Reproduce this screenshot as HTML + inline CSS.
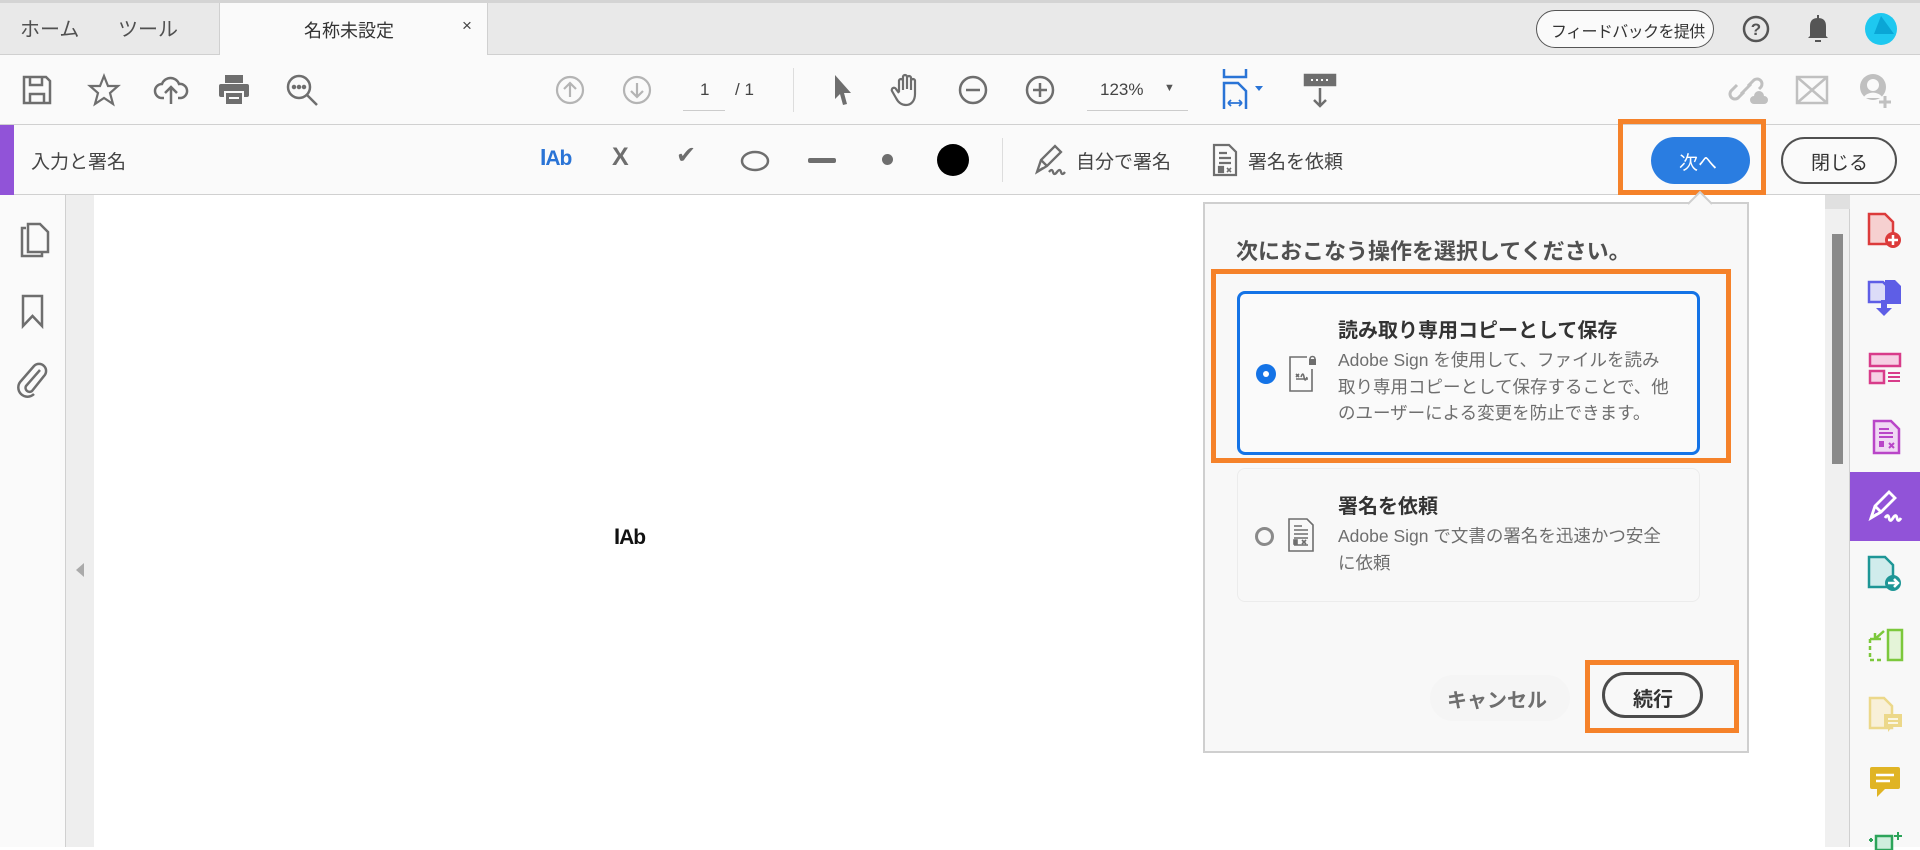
<!DOCTYPE html>
<html><head><meta charset="utf-8">
<style>
*{margin:0;padding:0;box-sizing:border-box}
body{width:1920px;height:847px;overflow:hidden;position:relative;background:#fff;font-family:"Liberation Sans","Noto Sans CJK JP",sans-serif;color:#4b4b4b}
.a{position:absolute}
svg{position:absolute;overflow:visible}
.t{position:absolute;white-space:nowrap}
</style></head><body>
<div class="a" style="left:0;top:0;width:1920px;height:55px;background:#e9e9e9;border-top:3px solid #d4d4d4;border-bottom:1px solid #d0d0d0"></div>
<div class="t" style="left:20px;top:13px;font-size:20px;color:#505050">ホーム</div>
<div class="t" style="left:118px;top:13px;font-size:20px;color:#505050">ツール</div>
<div class="a" style="left:219px;top:3px;width:269px;height:53px;background:#fafafa;border-left:1px solid #d0d0d0;border-right:1px solid #d0d0d0"></div>
<div class="t" style="left:304px;top:17px;font-size:18px;color:#333">名称未設定</div>
<div class="t" style="left:462px;top:16px;font-size:17px;color:#444">×</div>
<div class="a" style="left:1536px;top:10px;width:178px;height:38px;border:1.5px solid #555;border-radius:19px;background:#fafafa"></div>
<div class="t" style="left:1551px;top:18px;font-size:16px;color:#333;letter-spacing:-0.6px">フィードバックを提供</div>
<svg style="left:1742px;top:15px" width="28" height="28"><circle cx="14" cy="14" r="12" fill="none" stroke="#555" stroke-width="2.5"/><text x="14" y="20" font-size="17" font-weight="bold" text-anchor="middle" fill="#555" font-family="Liberation Sans">?</text></svg>
<svg style="left:1806px;top:14px" width="24" height="30"><path d="M4 22 L4 12 Q4 4 12 4 Q20 4 20 12 L20 22 L22 24 L2 24Z M9 26 h6 v2 h-6z M11 1 h2 v4 h-2z" fill="#555"/></svg>
<svg style="left:1864px;top:12px" width="34" height="34"><circle cx="17" cy="17" r="16" fill="#1ec8f0"/><path d="M17 4 L30 22 L10 22Z" fill="#0aa6d6"/></svg>
<div class="a" style="left:0;top:55px;width:1920px;height:70px;background:#fafafa;border-bottom:1px solid #d0d0d0"></div>
<svg style="left:22px;top:75px" width="30" height="30" fill="none" stroke="#6e6e6e" stroke-width="2.5"><path d="M2 2h22l4 4v22H2z"/><path d="M8 2v8h12V2M8 28v-9h14v9"/></svg>
<svg style="left:88px;top:74px" width="32" height="32" fill="none" stroke="#6e6e6e" stroke-width="2.2"><path d="M16 2l4 10h10l-8 7 3 11-9-6-9 6 3-11-8-7h10z"/></svg>
<svg style="left:154px;top:74px" width="34" height="32" fill="none" stroke="#6e6e6e" stroke-width="2.5"><path d="M10 24H8a7 7 0 0 1 0-14 9 9 0 0 1 17 0 7 7 0 0 1 2 14h-3"/><path d="M17 30V14M11 19l6-6 6 6"/></svg>
<svg style="left:218px;top:74px" width="32" height="32"><rect x="7" y="1" width="18" height="8" fill="#6e6e6e"/><rect x="1" y="10" width="30" height="13" rx="2" fill="#6e6e6e"/><rect x="7" y="18" width="18" height="13" fill="#6e6e6e" stroke="#fafafa" stroke-width="2"/><path d="M11 24h10" stroke="#fafafa" stroke-width="2"/></svg>
<svg style="left:286px;top:74px" width="34" height="34" fill="none" stroke="#6e6e6e" stroke-width="2.5"><circle cx="13" cy="13" r="11"/><path d="M21 21l10 10"/><circle cx="8" cy="13" r="1" fill="#6e6e6e"/><circle cx="13" cy="13" r="1" fill="#6e6e6e"/><circle cx="18" cy="13" r="1" fill="#6e6e6e"/></svg>
<svg style="left:555px;top:75px" width="30" height="30" fill="none" stroke="#b4b4b4" stroke-width="2.2"><circle cx="15" cy="15" r="13"/><path d="M15 22V8M9 14l6-6 6 6"/></svg>
<svg style="left:622px;top:75px" width="30" height="30" fill="none" stroke="#b4b4b4" stroke-width="2.2"><circle cx="15" cy="15" r="13"/><path d="M15 8v14M9 16l6 6 6-6"/></svg>
<div class="t" style="left:700px;top:80px;font-size:17px;color:#444">1</div>
<div class="a" style="left:683px;top:110px;width:42px;height:1px;background:#ccc"></div>
<div class="t" style="left:735px;top:80px;font-size:17px;color:#444">/ 1</div>
<div class="a" style="left:793px;top:68px;width:1px;height:44px;background:#ddd"></div>
<svg style="left:832px;top:73px" width="22" height="34"><path d="M3 2 L19 20 L12 20 L15 31 L11 32 L8 21 L3 26Z" fill="#6e6e6e"/></svg>
<svg style="left:890px;top:72px" width="34" height="36" fill="none" stroke="#6e6e6e" stroke-width="2.2"><path d="M9 20V9a2 2 0 0 1 4 0v9M13 17V5a2 2 0 0 1 4 0v12M17 17V6a2 2 0 0 1 4 0v12M21 17V9a2 2 0 0 1 4 0v13c0 7-4 11-9 11s-8-3-10-7l-4-7a2 2 0 0 1 4-2l3 4"/></svg>
<svg style="left:958px;top:75px" width="30" height="30" fill="none" stroke="#6e6e6e" stroke-width="2.5"><circle cx="15" cy="15" r="13"/><path d="M8 15h14"/></svg>
<svg style="left:1025px;top:75px" width="30" height="30" fill="none" stroke="#6e6e6e" stroke-width="2.5"><circle cx="15" cy="15" r="13"/><path d="M8 15h14M15 8v14"/></svg>
<div class="t" style="left:1100px;top:80px;font-size:17px;color:#444">123%</div>
<div class="t" style="left:1164px;top:82px;font-size:11px;color:#555">▼</div>
<div class="a" style="left:1087px;top:110px;width:101px;height:1px;background:#ccc"></div>
<svg style="left:1222px;top:69px" width="50" height="42" fill="none" stroke="#2a74d6" stroke-width="2.5"><path d="M2 0v8h22V0"/><path d="M2 40V14h14l8 8v18"/><path d="M6 34h14M6 34l3-3M6 34l3 3M20 34l-3-3M20 34l-3 3" stroke-width="1.8"/><path d="M33 17l4 5 4-5z" fill="#2a74d6" stroke="none"/></svg>
<svg style="left:1303px;top:73px" width="36" height="36" fill="none" stroke="#6e6e6e" stroke-width="2.5"><rect x="2" y="2" width="30" height="10" fill="#6e6e6e"/><path d="M8 7h2M13 7h2M18 7h2M23 7h2" stroke="#fafafa" stroke-width="2"/><path d="M17 15v18M11 27l6 6 6-6"/></svg>
<svg style="left:1730px;top:72px" width="38" height="36" fill="none" stroke="#c0c0c0" stroke-width="3"><path d="M14 20l-6 6a5 5 0 0 1-7-7l6-6M18 14l6-6a5 5 0 0 1 7 7l-2 2M11 22l10-10"/><path d="M24 32a4 4 0 0 1 0-8 5 5 0 0 1 10 0 4 4 0 0 1 0 8z" fill="#c0c0c0" stroke="none"/></svg>
<svg style="left:1796px;top:76px" width="32" height="28" fill="none" stroke="#c0c0c0" stroke-width="2.5"><rect x="1" y="1" width="30" height="26"/><path d="M1 1l30 26M31 1L1 27"/></svg>
<svg style="left:1858px;top:72px" width="36" height="38"><circle cx="15" cy="15" r="13" fill="#c0c0c0"/><circle cx="15" cy="13" r="6" fill="#fafafa"/><path d="M5 26a12 12 0 0 1 20 0" fill="#fafafa"/><path d="M27 24v12M21 30h12" stroke="#c0c0c0" stroke-width="3"/></svg>
<div class="a" style="left:0;top:125px;width:1920px;height:70px;background:#fafafa;border-bottom:1px solid #d0d0d0"></div>
<div class="a" style="left:0;top:125px;width:14px;height:70px;background:#9153d8"></div>
<div class="t" style="left:31px;top:147px;font-size:19px;color:#444">入力と署名</div>
<div class="t" style="left:540px;top:144px;font-size:23px;font-weight:bold;color:#2a74d6;letter-spacing:-1px">I<span style="font-size:21px">Ab</span></div>
<div class="t" style="left:612px;top:143px;font-size:25px;font-weight:bold;color:#6e6e6e">X</div>
<div class="t" style="left:676px;top:141px;font-size:24px;color:#6e6e6e">✔</div>
<svg style="left:740px;top:150px" width="30" height="22"><ellipse cx="15" cy="11" rx="13" ry="9" fill="none" stroke="#6e6e6e" stroke-width="2.5"/></svg>
<div class="a" style="left:808px;top:158px;width:28px;height:5px;background:#6e6e6e;border-radius:2px"></div>
<div class="a" style="left:882px;top:154px;width:11px;height:11px;background:#6e6e6e;border-radius:50%"></div>
<div class="a" style="left:937px;top:144px;width:32px;height:32px;background:#000;border-radius:50%"></div>
<div class="a" style="left:1002px;top:138px;width:1px;height:44px;background:#ddd"></div>
<svg style="left:1033px;top:144px" width="36" height="32" fill="none" stroke="#6e6e6e" stroke-width="2.3"><path d="M4 28l4-12 14-14 6 6-14 14z M8 16l6 6 M4 28l6-4"/><path d="M16 28q3-4 4 0t4 0 4 0 4 0"/></svg>
<div class="t" style="left:1076px;top:147px;font-size:19px;color:#444">自分で署名</div>
<svg style="left:1212px;top:143px" width="26" height="34" fill="none" stroke="#6e6e6e" stroke-width="2.2"><path d="M2 2h15l7 7v23H2z"/><path d="M7 10h8M7 15h12M7 20h12"/><path d="M7 24h4v5H7z" fill="#6e6e6e"/><path d="M15 25l4 4M19 25l-4 4" stroke-width="1.6"/></svg>
<div class="t" style="left:1248px;top:147px;font-size:19px;color:#444">署名を依頼</div>
<div class="a" style="left:1618px;top:119px;width:148px;height:76px;border:5px solid #f5822a"></div>
<div class="a" style="left:1651px;top:137px;width:99px;height:47px;background:#2a7de1;border-radius:24px"></div>
<div class="t" style="left:1679px;top:148px;font-size:19px;color:#fff">次へ</div>
<div class="a" style="left:1781px;top:137px;width:116px;height:47px;border:2px solid #505050;border-radius:24px;background:#fafafa"></div>
<div class="t" style="left:1811px;top:148px;font-size:19px;color:#333">閉じる</div>
<div class="a" style="left:0;top:195px;width:66px;height:652px;background:#fafafa;border-right:1px solid #d0d0d0"></div>
<div class="a" style="left:66px;top:195px;width:28px;height:652px;background:#eeeeee"></div>
<svg style="left:20px;top:222px" width="30" height="38" fill="none" stroke="#6e6e6e" stroke-width="2.5"><path d="M6 6H2v28h20v-4"/><path d="M8 2h12l8 8v20H8z"/></svg>
<svg style="left:21px;top:294px" width="24" height="34" fill="none" stroke="#6e6e6e" stroke-width="2.5"><path d="M2 2h19v30l-9.5-10L2 32z"/></svg>
<svg style="left:16px;top:362px" width="32" height="34" fill="none" stroke="#6e6e6e" stroke-width="2.5"><path d="M24 8L10 24a4 4 0 0 0 6 5L28 14a7 7 0 0 0-10-10L5 19a9 9 0 0 0 13 13"/></svg>
<svg style="left:74px;top:562px" width="12" height="16"><path d="M10 1L2 8l8 7z" fill="#aaa"/></svg>
<div class="t" style="left:614px;top:524px;font-size:22px;font-weight:bold;color:#111;letter-spacing:-1px">I<span style="font-size:21px">Ab</span></div>
<div class="a" style="left:1825px;top:195px;width:25px;height:652px;background:#f0f0f0;border-right:1px solid #d0d0d0"></div>
<div class="a" style="left:1825px;top:195px;width:25px;height:14px;background:#e0e0e0"></div>
<div class="a" style="left:1832px;top:234px;width:11px;height:230px;background:#8a8a8a"></div>
<div class="a" style="left:1850px;top:195px;width:70px;height:652px;background:#f8f8f8"></div>
<div class="a" style="left:1850px;top:472px;width:70px;height:69px;background:#9153d8"></div>
<svg style="left:1867px;top:212px" width="40" height="40"><path d="M2 2h16l8 8v22H2z" fill="#f6d0d0" stroke="#dc3b3b" stroke-width="2.5"/><circle cx="26" cy="28" r="8" fill="#dc3b3b"/><path d="M26 23v10M21 28h10" stroke="#fff" stroke-width="2.5"/></svg>
<svg style="left:1867px;top:278px" width="40" height="40"><path d="M2 4h14l4 4v16H2z" fill="#dcdcf8" stroke="#5e5ee6" stroke-width="2.5"/><path d="M18 2h10l6 6v18H18z" fill="#5e5ee6"/><path d="M14 22v8h-5l8 8 8-8h-5v-8z" fill="#5e5ee6"/></svg>
<svg style="left:1868px;top:352px" width="36" height="34"><rect x="2" y="2" width="30" height="12" fill="#f6d0e4" stroke="#d83c8a" stroke-width="2.5"/><rect x="2" y="19" width="14" height="12" fill="#f6d0e4" stroke="#d83c8a" stroke-width="2.5"/><path d="M20 21h12M20 25h12M20 29h12" stroke="#d83c8a" stroke-width="2"/></svg>
<svg style="left:1872px;top:419px" width="30" height="36"><path d="M2 2h17l8 8v24H2z" fill="#f0d8f4" stroke="#b945c8" stroke-width="2.5"/><path d="M7 10h10M7 14h14M7 18h14" stroke="#b945c8" stroke-width="2"/><path d="M7 22h5v6H7z" fill="#b945c8"/><path d="M17 24l5 5M22 24l-5 5" stroke="#b945c8" stroke-width="2"/></svg>
<svg style="left:1867px;top:490px" width="38" height="34" fill="none" stroke="#fff" stroke-width="2.8"><path d="M4 28l4-12 14-14 6 6-14 14z M8 16l6 6 M4 28l6-4"/><path d="M18 28q3-5 4 0t4 0 4 0 4 0"/></svg>
<svg style="left:1867px;top:555px" width="40" height="40"><path d="M2 2h16l8 8v22H2z" fill="#d0ecec" stroke="#1e9696" stroke-width="2.5"/><circle cx="26" cy="28" r="8" fill="#1e9696"/><path d="M21 28h9M27 24l4 4-4 4" stroke="#fff" stroke-width="2.5" fill="none"/></svg>
<svg style="left:1868px;top:627px" width="36" height="36"><rect x="20" y="3" width="14" height="30" fill="#e4f4d8" stroke="#7cc83c" stroke-width="2.5"/><path d="M2 12v21h14M2 12h4" stroke="#7cc83c" stroke-width="2.5" stroke-dasharray="4 3" fill="none"/><path d="M16 4L7 12M7 6v6h6" stroke="#7cc83c" stroke-width="2.5" fill="none"/></svg>
<svg style="left:1868px;top:696px" width="38" height="38"><path d="M2 2h14l8 8v22H2z" fill="#f8f0d8" stroke="#ecd88a" stroke-width="2.5"/><rect x="16" y="18" width="18" height="13" fill="#ecd88a"/><path d="M20 31v5l4-5" fill="#ecd88a"/><path d="M20 23h10M20 27h10" stroke="#fff" stroke-width="1.6"/></svg>
<svg style="left:1868px;top:765px" width="34" height="34"><rect x="2" y="2" width="30" height="22" rx="2" fill="#e0b424"/><path d="M9 24v8l8-8" fill="#e0b424"/><path d="M8 10h18M8 16h14" stroke="#fff" stroke-width="2.5"/></svg>
<svg style="left:1868px;top:830px" width="36" height="20"><path d="M8 6h16v14H8z" fill="#cfeedd" stroke="#2ca45a" stroke-width="2.5"/><path d="M30 2v8M26 6h8M3 8v4M1 10h4" stroke="#2ca45a" stroke-width="2"/></svg>
<div class="a" style="left:1203px;top:202px;width:546px;height:551px;background:#f8f8f8;border:2px solid #cfcfcf"></div>
<svg style="left:1688px;top:191px" width="24" height="14"><path d="M0 13L12 1 24 13" fill="#f8f8f8" stroke="#cfcfcf" stroke-width="2"/></svg>
<div class="t" style="left:1236px;top:234px;font-size:22px;font-weight:bold;color:#505050">次におこなう操作を選択してください。</div>
<div class="a" style="left:1211px;top:269px;width:520px;height:194px;border:5px solid #f5822a"></div>
<div class="a" style="left:1237px;top:291px;width:463px;height:164px;border:3px solid #1473e6;border-radius:8px;background:#fafafa"></div>
<div class="a" style="left:1256px;top:364px;width:20px;height:20px;border-radius:50%;background:#1473e6"></div>
<div class="a" style="left:1263px;top:371px;width:6px;height:6px;border-radius:50%;background:#fff"></div>
<svg style="left:1288px;top:355px" width="30" height="38" fill="none" stroke="#6e6e6e" stroke-width="1.6"><path d="M24 14v22H2V2h17"/><rect x="21" y="4" width="7" height="6" fill="#6e6e6e" stroke="none"/><path d="M22 4a2.5 2.5 0 0 1 5 0" /><path d="M8 19l3 3M11 19l-3 3M13 22q2-6 3 0t3 0M8 24h12"/></svg>
<div class="t" style="left:1338px;top:314px;font-size:20px;font-weight:bold;color:#333">読み取り専用コピーとして保存</div>
<div class="t" style="left:1338px;top:347px;font-size:17.5px;color:#6e6e6e;line-height:26.5px">Adobe Sign を使用して、ファイルを読み<br>取り専用コピーとして保存することで、他<br>のユーザーによる変更を防止できます。</div>
<div class="a" style="left:1237px;top:468px;width:463px;height:134px;border:1px solid #ececec;border-radius:8px"></div>
<div class="a" style="left:1255px;top:527px;width:19px;height:19px;border-radius:50%;border:3px solid #8a8a8a"></div>
<svg style="left:1287px;top:517px" width="30" height="38" fill="none" stroke="#6e6e6e" stroke-width="1.6"><path d="M2 2h18l6 6v26H2z"/><path d="M7 9h8M7 13h14M7 17h14M7 21h14M7 28h14"/><rect x="7" y="23" width="3" height="4" fill="#6e6e6e"/><path d="M15 23l4 4M19 23l-4 4"/></svg>
<div class="t" style="left:1338px;top:490px;font-size:20px;font-weight:bold;color:#333">署名を依頼</div>
<div class="t" style="left:1338px;top:523px;font-size:17.5px;color:#6e6e6e;line-height:26.5px">Adobe Sign で文書の署名を迅速かつ安全<br>に依頼</div>
<div class="a" style="left:1430px;top:675px;width:140px;height:46px;border-radius:23px;background:#f5f5f5"></div>
<div class="t" style="left:1447px;top:684px;font-size:20px;font-weight:bold;color:#6e6e6e">キャンセル</div>
<div class="a" style="left:1585px;top:660px;width:154px;height:73px;border:5px solid #f5822a"></div>
<div class="a" style="left:1602px;top:672px;width:101px;height:46px;border:3px solid #4b4b4b;border-radius:23px"></div>
<div class="t" style="left:1633px;top:683px;font-size:20px;font-weight:bold;color:#333">続行</div>
</body></html>
